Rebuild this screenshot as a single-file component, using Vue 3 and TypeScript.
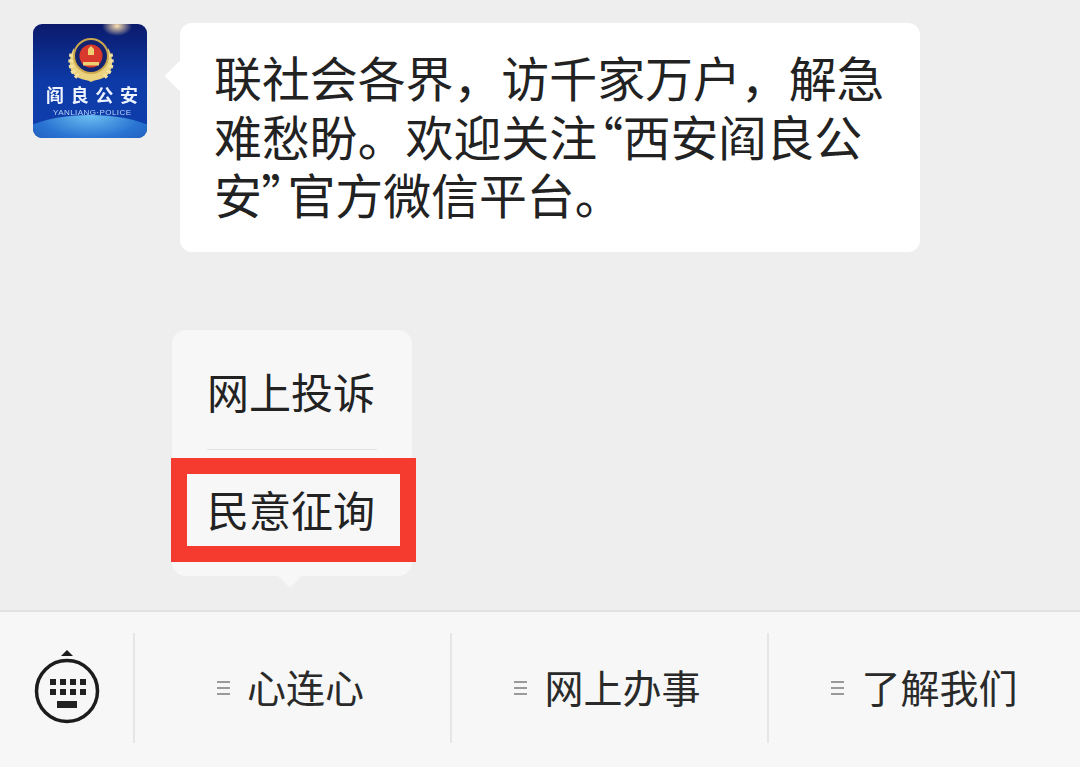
<script setup lang="ts">
const menuItems = [
  { label: "心连心" },
  { label: "网上办事" },
  { label: "了解我们" },
];
const keys = [0, 1, 2, 3];
</script>

<template>
  <div class="page">
    <div class="chat">
      <div class="message">
        <svg class="avatar" viewBox="0 0 114 114" width="114" height="114">
          <defs>
            <linearGradient id="sky" x1="0" y1="0" x2="0" y2="1">
              <stop offset="0" stop-color="#0b1a6c" />
              <stop offset="0.5" stop-color="#0d3aa6" />
              <stop offset="1" stop-color="#0f3fae" />
            </linearGradient>
            <radialGradient id="planet" cx="0.5" cy="0" r="0.8">
              <stop offset="0" stop-color="#6cc0f2" />
              <stop offset="0.35" stop-color="#2a74d2" />
              <stop offset="1" stop-color="#0e2f8e" />
            </radialGradient>
            <radialGradient id="flare">
              <stop offset="0" stop-color="#ffe2b0" />
              <stop offset="1" stop-color="#ffe2b0" stop-opacity="0" />
            </radialGradient>
            <clipPath id="round"><rect width="114" height="114" rx="9" /></clipPath>
          </defs>
          <g clip-path="url(#round)">
            <rect width="114" height="114" fill="url(#sky)" />
            <ellipse cx="84" cy="2" rx="15" ry="10" fill="url(#flare)" />
            <ellipse cx="57" cy="132" rx="90" ry="41" fill="url(#planet)" />
            <!-- wheat wreath -->
            <path d="M41 24C34 36 36 50 46 54C50 56 55 56 58 58C61 56 66 56 70 54C80 50 82 36 75 24C76 36 70 46 58 48C46 46 40 36 41 24Z" fill="#ead27e" />
            <path d="M39 30C36 40 39 50 47 54M77 30C80 40 77 50 69 54" fill="none" stroke="#f4e29c" stroke-width="5" stroke-dasharray="3 2.500" />
            <circle cx="58" cy="32" r="17" fill="#14246e" stroke="#caa84f" stroke-width="2" />
            <circle cx="58" cy="32" r="11.500" fill="#d9382c" />
            <path d="M50 38h16v3.500H50zM55 25l3-3 3 3v6h-6z" fill="#efcf70" />
            <text class="avatar-title" x="59" y="78" textLength="92" lengthAdjust="spacing">阎良公安</text>
            <text class="avatar-sub" x="59" y="91" textLength="78" lengthAdjust="spacing">YANLIANG·POLICE</text>
          </g>
        </svg>
        <div class="bubble">
          联社会各界，访千家万户，解急难愁盼。欢迎关注<span class="quote open">“</span>西安阎良公安<span class="quote close">”</span>官方微信平台。
        </div>
      </div>

      <div class="popup">
        <div class="popup-item">网上投诉</div>
        <div class="popup-item">民意征询</div>
        <div class="highlight"></div>
      </div>
    </div>

    <div class="toolbar">
      <div class="switch">
        <svg viewBox="0 0 66 76" width="66" height="76">
          <path d="M27 7L33 1L39 7Z" fill="#1c1c1c" />
          <circle cx="33" cy="42" r="30.500" fill="none" stroke="#1c1c1c" stroke-width="3.500" />
          <rect v-for="k in keys" :key="'a' + k" :x="16 + k * 10" y="30" width="6" height="6" fill="#222" />
          <rect v-for="k in keys" :key="'b' + k" :x="16 + k * 10" y="40" width="6" height="6" fill="#222" />
          <rect x="23" y="52" width="20" height="7" fill="#222" />
        </svg>
      </div>
      <div v-for="item in menuItems" :key="item.label" class="tool-item">
        <span class="lines"><i></i><i></i><i></i></span>
        <span>{{ item.label }}</span>
      </div>
    </div>
  </div>
</template>

<style scoped>
.page {
  width: 1080px;
  height: 767px;
  display: flex;
  flex-direction: column;
  overflow: hidden;
  background: #eeeeee;
  color: #222;
  font-family: "Noto Sans CJK SC", "Liberation Sans", sans-serif;
}
.chat {
  flex: 1;
  padding: 23px 0 0 33px;
}
.message {
  display: flex;
  align-items: flex-start;
}
.avatar {
  flex: none;
  margin-top: 1px;
  filter: blur(0.5px);
}
.avatar-title {
  fill: #eef4ff;
  font-size: 18px;
  font-weight: 700;
  text-anchor: middle;
}
.avatar-sub {
  fill: #b9d3f5;
  font-size: 8px;
  text-anchor: middle;
  font-family: "Liberation Sans", sans-serif;
}
.bubble {
  position: relative;
  box-sizing: border-box;
  width: 740px;
  height: 229px;
  margin-left: 33px;
  padding: 24px 33px 25px 34px;
  border-radius: 12px;
  background: #fff;
  font-size: 47.900px;
  line-height: 58.500px;
}
.bubble::before {
  content: "";
  position: absolute;
  left: -11px;
  top: 42px;
  width: 22px;
  height: 22px;
  background: #fff;
  transform: rotate(45deg);
}
.quote {
  font-size: 47px;
  line-height: 1;
  font-feature-settings: "palt";
}
.quote.open {
  padding-left: 2px;
}
.quote.close {
  padding-right: 2px;
}
.popup {
  position: relative;
  width: 240px;
  height: 246px;
  margin: 78px 0 0 139px;
  border-radius: 14px;
  background: #f7f7f7;
}
.popup::after {
  content: "";
  position: absolute;
  left: 109px;
  bottom: -8px;
  width: 18px;
  height: 18px;
  background: #f7f7f7;
  transform: rotate(45deg);
}
.popup-item {
  margin: 0 35px;
  font-size: 42px;
  white-space: nowrap;
}
.popup-item:first-child {
  height: 119px;
  line-height: 122px;
  border-bottom: 1px solid #e2e2e2;
}
.popup-item:nth-child(2) {
  line-height: 118px;
}
.highlight {
  position: absolute;
  z-index: 1;
  left: -1px;
  top: 128px;
  width: 245px;
  height: 104px;
  box-sizing: border-box;
  border: 16px solid #f53a30;
}
.toolbar {
  display: flex;
  align-items: center;
  flex: none;
  height: 157px;
  padding-bottom: 4px;
  box-sizing: border-box;
  border-top: 2px solid #e2e2e2;
  background: #f7f7f7;
}
.switch {
  flex: none;
  width: 133px;
  display: flex;
  justify-content: center;
  padding-bottom: 2px;
}
.tool-item {
  flex: none;
  width: 317px;
  height: 110px;
  display: flex;
  align-items: center;
  justify-content: center;
  gap: 17px;
  box-sizing: border-box;
  padding: 0 4px 4px 0;
  border-left: 2px solid #e6e6e6;
  font-size: 39px;
  color: #2a2a2a;
}
.lines {
  display: flex;
  flex-direction: column;
  gap: 4px;
  margin-top: 4px;
}
.lines i {
  display: block;
  width: 13px;
  height: 2px;
  background: #9a9a9a;
}
</style>
